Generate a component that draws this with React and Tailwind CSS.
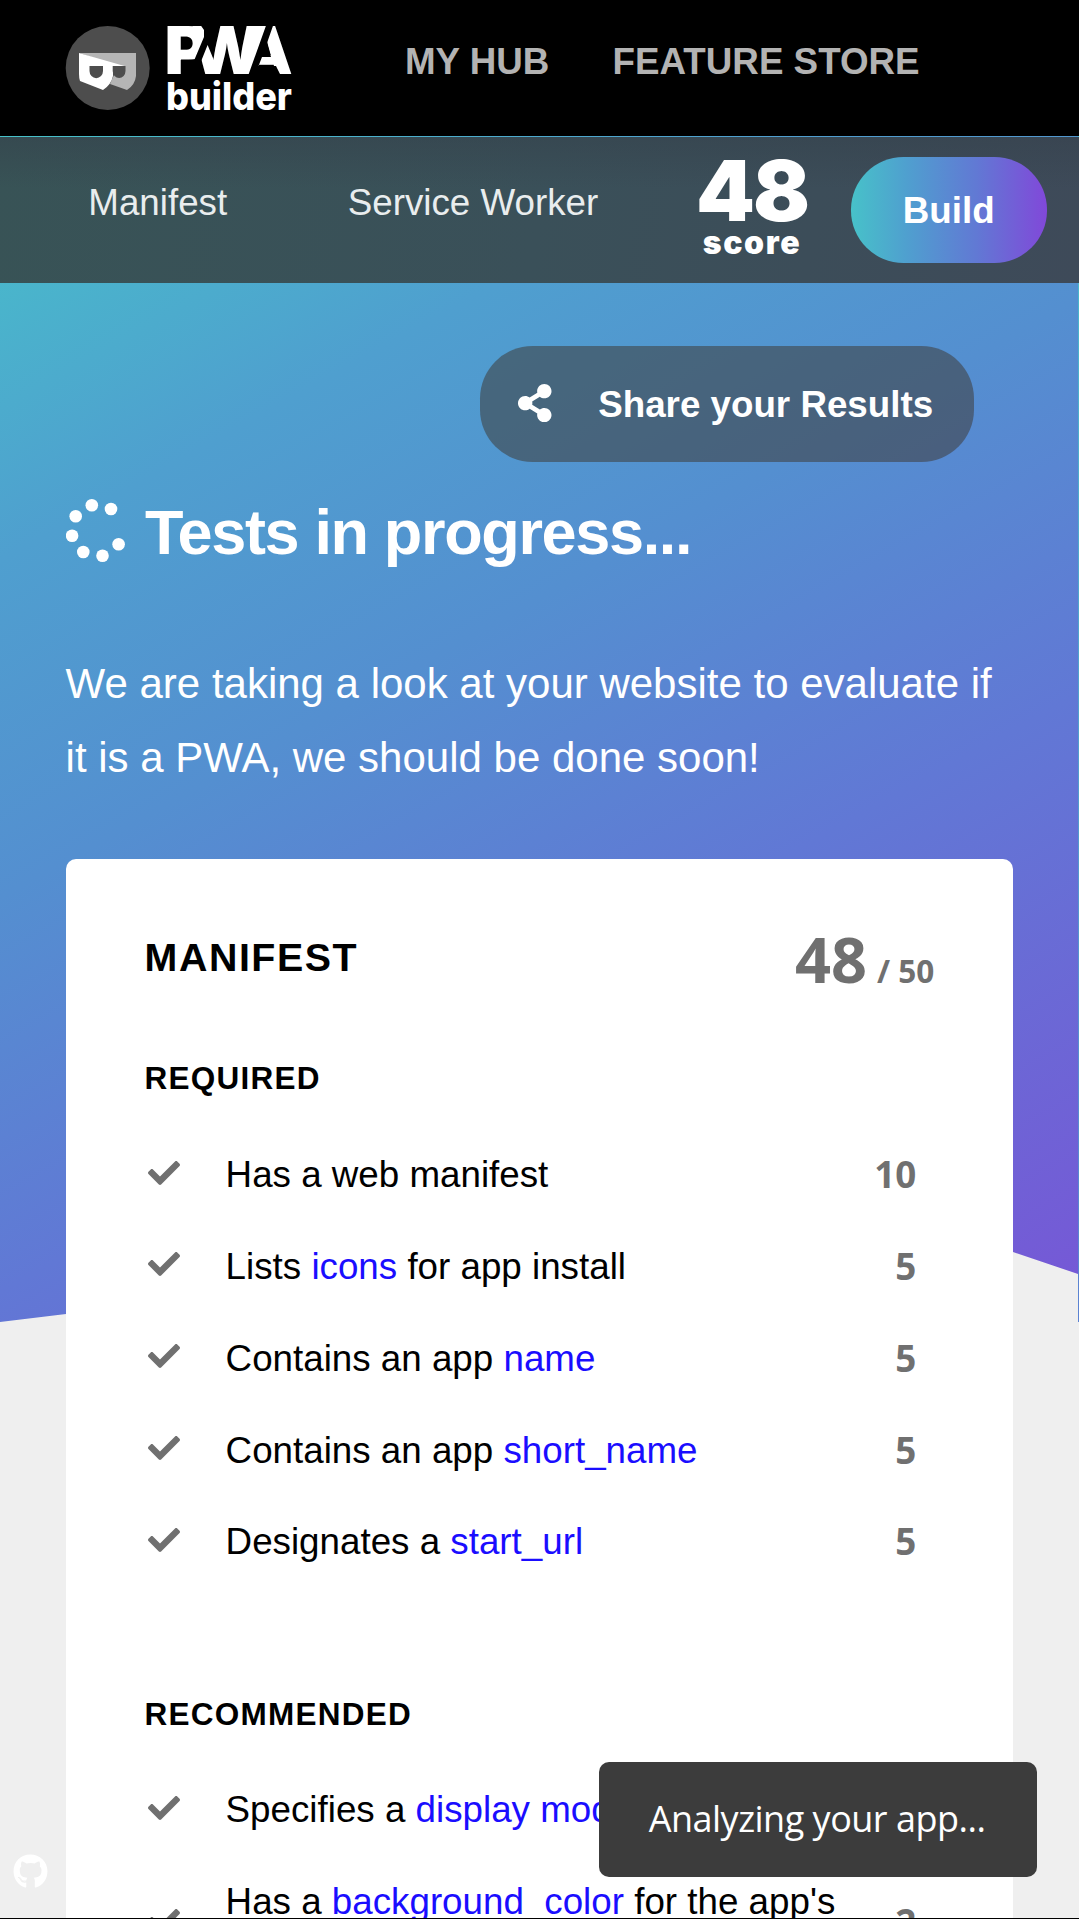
import React from "react";
import { FaCheck, FaShareAlt, FaGithub } from "react-icons/fa";

const required = [
  { parts: ["Has a web manifest"], score: 10 },
  { parts: ["Lists ", { href: "icons" }, " for app install"], score: 5 },
  { parts: ["Contains an app ", { href: "name" }], score: 5 },
  { parts: ["Contains an app ", { href: "short_name" }], score: 5 },
  { parts: ["Designates a ", { href: "start_url" }], score: 5 },
];

const recommended = [
  { parts: ["Specifies a ", { href: "display mode" }], score: "" },
  { parts: ["Has a ", { href: "background_color" }, " for the app's splash screen"], score: 2 },
];

function Logo() {
  return (
    <svg className="block h-[94px] w-[234px] shrink-0 overflow-visible" viewBox="62 23 234 94" fill="#fff">
      <circle cx="107.700" cy="68" r="42" fill="#4d4d4d" />
      <path d="M79 53 H136 V76 Q135 85 127 90 L110 84 L118 66 Z" fill="#b5b5b5" />
      <path d="M79 53 L124.500 66 H113 V76 Q111 85 103 90 L80 81 Q79 78 79 74 Z" fill="#fff" />
      <path d="M89.500 66 H103 V71 A6.600 7 0 0 1 89.500 71 Z M112.700 66 H125.500 V71 A6.400 7 0 0 1 112.700 71 Z" fill="#4d4d4d" />
      <text x="164.500 191 240" y="74.300" fontFamily="Inter" fontWeight="900" fontSize="66.400">
        PWA
      </text>
      {/* slanted notches between the letters of the wordmark */}
      <path
        d="M220 20 L197 20 L204 30 L204 37 L194.500 59.500 L181 59.500 L181 76 L205 76 L200.800 62 L207.600 45 L213 58 Z M268 20 L275 20 L267 43 L271 57 L262 57 L258.500 66 L276 66 L281 76 L248 76 Z"
        fill="#000"
      />
      <text x="166" y="109.900" fontFamily="Inter" fontWeight="800" fontSize="38.500" textLength="126" lengthAdjust="spacingAndGlyphs">
        builder
      </text>
    </svg>
  );
}

function Spinner() {
  const dots = [
    [25.8, 8.3], [45, 12], [9.7, 19.3], [6.1, 38.7], [17.3, 55], [36.5, 58.7], [52.6, 47.3],
  ];
  return (
    <svg className="h-[67px] w-[60px] shrink-0" viewBox="0 0 60 67" fill="#fff">
      {dots.map(([x, y]) => (
        <circle key={x} cx={x} cy={y} r="6.300" />
      ))}
    </svg>
  );
}

function Row({ item }) {
  return (
    <li className="flex min-h-[91.800px] items-center py-[24.400px]">
      <FaCheck className="-mt-1 ml-[3.500px] size-8 shrink-0 text-[#707070]" />
      <p className="ml-[45.500px] w-[620px] leading-[43px]">
        {item.parts.map((p, i) =>
          p.href ? (
            <a key={i} className="text-[#1a0dff]">{p.href}</a>
          ) : (
            <React.Fragment key={i}>{p}</React.Fragment>
          )
        )}
      </p>
      <span className="ml-auto mr-[97px] font-['Noto_Sans',sans-serif] font-bold leading-[43px] text-[#707070]">
        {item.score}
      </span>
    </li>
  );
}

export default function App() {
  return (
    <div className="relative h-[1919px] w-[1079px] overflow-hidden bg-[#efefef] font-['Liberation_Sans',Arial,sans-serif] text-[36.750px] text-black">
      <div className="absolute left-0 top-0 h-[1322px] w-[1078px] bg-[linear-gradient(151deg,#46c4c9_90px,#4f9fcf_490px,#548fd0_785px,#6178d5_1130px,#7559d6_1638px)] [clip-path:polygon(0_0,100%_0,100%_1274px,1013px_1252px,900px_1213px,0_1322px)]" />
      <div className="absolute right-0 top-0 h-[1322px] w-px bg-[linear-gradient(#46c4c9,#5b82d2)]" />

      <div className="relative flex h-full flex-col">
        <header className="flex h-[136px] shrink-0 bg-black pl-[62px] pt-[23px] font-bold text-[#b3b3b3]">
          <Logo />
          <nav className="ml-[109px] flex gap-[63.300px] leading-[78px]">
            <a>MY HUB</a>
            <a>FEATURE STORE</a>
          </nav>
        </header>

        <div className="mt-px flex h-[146px] shrink-0 bg-[linear-gradient(rgba(52,64,74,0.5),rgba(52,64,74,0)_35%),linear-gradient(100deg,#385356,#3a5059_50%,#3e4a59)]">
          <nav className="flex w-[698px] gap-[120.500px] pl-[88.300px] pt-[45px] leading-[42px] text-[#e9edee]">
            <a>Manifest</a>
            <a>Service Worker</a>
          </nav>
          <div className="flex w-[108px] flex-col items-center pt-4 font-['Inter',sans-serif] font-black text-white">
            <span className="text-[84px] leading-[75px] tracking-[-2px]">48</span>
            <span className="text-[32px] leading-[30px] tracking-[1.600px]">score</span>
          </div>
          <button className="ml-[44.500px] mt-5 h-[106px] w-[196.500px] rounded-[52.500px] bg-[linear-gradient(90deg,#47c2c9,#4fa0cf_28%,#6179d4_64%,#8148d9)] pt-px font-bold text-white">
            Build
          </button>
        </div>

        <main className="flex flex-1 flex-col px-[65.600px] text-white">
          <button className="ml-[414.600px] mt-[63.400px] flex h-[115.600px] w-[494px] shrink-0 items-center rounded-[52.500px] bg-[rgba(62,55,50,0.52)] pl-[38px] pt-px font-bold">
            <FaShareAlt className="-mt-[3px] h-[38.300px] w-[33.500px]" />
            <span className="ml-[46.500px]">Share your Results</span>
          </button>

          <div className="mt-8 flex h-[76px] shrink-0">
            <div className="pt-[3px]"><Spinner /></div>
            <h1 className="ml-[19.500px] whitespace-nowrap text-[63px] font-bold leading-[76px] tracking-[-1.350px]">Tests in progress...</h1>
          </div>

          <p className="mt-[77.500px] whitespace-nowrap text-[42px] leading-[73.500px]">
            We are taking a look at your website to evaluate if<br />
            it is a PWA, we should be done soon!
          </p>

          <section className="mt-[64.300px] h-[1200px] w-[947.800px] shrink-0 rounded-[10px] bg-white pl-[79px] pt-[65px] text-black">
            <div className="flex h-[60px] items-baseline justify-between pr-[79px]">
              <h2 className="text-[39.375px] font-bold leading-[60px] tracking-[1.550px]">MANIFEST</h2>
              <p className="mt-[-7px] flex items-baseline gap-2.5 font-['Noto_Sans',sans-serif] text-[31.500px] font-bold leading-[60px] text-[#707070]">
                <span className="relative top-3 text-[63px]">48</span>
                <span className="relative top-3">/ 50</span>
              </p>
            </div>
            <h3 className="mt-[74px] text-[31.500px] font-bold leading-[40px] tracking-[1.250px]">REQUIRED</h3>
            <ul className="mt-[31px]">
              {required.map((item, i) => <Row key={i} item={item} />)}
            </ul>
            <h3 className="mt-[106px] text-[31.500px] font-bold leading-[40px] tracking-[1.250px]">RECOMMENDED</h3>
            <ul className="mt-[30px]">
              {recommended.map((item, i) => <Row key={i} item={item} />)}
            </ul>
          </section>
        </main>
      </div>

      <FaGithub className="absolute left-[13px] top-[1854px] size-[35px] text-white" />
      <div className="absolute left-[598.700px] top-[1761.500px] flex h-[115px] w-[438px] items-center whitespace-nowrap rounded-[10px] bg-[#3c3c3c] pl-[50px] font-['Open_Sans',sans-serif] text-[36px] tracking-[-0.500px] text-white">
        Analyzing your app...
      </div>
      <div className="absolute bottom-0 left-0 h-px w-full bg-black" />
    </div>
  );
}
